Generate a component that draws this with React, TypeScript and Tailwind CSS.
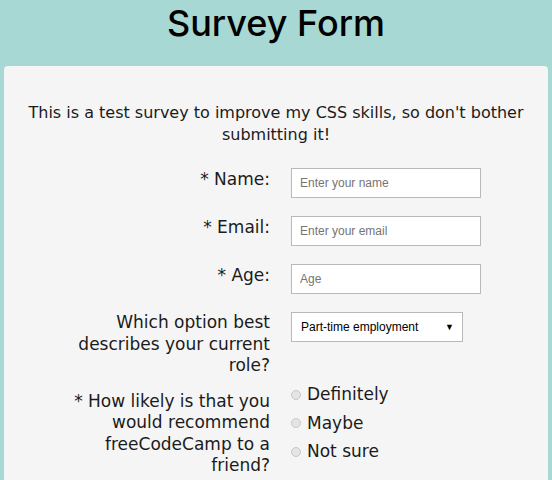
import React from 'react';

const labelCls = 'w-[215px] shrink-0 text-right text-[17px] leading-[21.5px] text-[#1b1b1b]';

function TextRow({ label, placeholder, width = 'w-[190px]' }: { label: string; placeholder: string; width?: string }) {
  return (
    <div className="flex items-start mb-[18px]">
      <label className={`${labelCls} pt-[1px]`}>{label}</label>
      <input
        className={`ml-[21px] h-[30px] ${width} border border-[#b9b9b9] bg-white px-[8px] text-[12px] outline-none placeholder:text-[#757575]`}
        style={{ fontFamily: '"Liberation Sans", Arial, sans-serif' }}
        placeholder={placeholder}
      />
    </div>
  );
}

export default function App() {
  return (
    <div className="min-h-[480px] bg-[#a8d8d3] pb-10" style={{ fontFamily: '"DejaVu Sans", Verdana, sans-serif' }}>
      <h1
        className="pt-[3px] text-center text-[36px] leading-[40px] font-medium text-black"
        style={{ fontFamily: 'Inter, "DejaVu Sans", sans-serif' }}
      >
        Survey Form
      </h1>
      <div className="mx-[4px] mt-[23px] rounded-[4px] bg-[#f5f5f5] pt-[36px] pb-10">
        <p className="mx-auto w-[520px] text-center text-[16px] leading-[21.5px] text-[#1b1b1b]">
          This is a test survey to improve my CSS skills, so don't bother submitting it!
        </p>
        <form className="mt-[23px] pl-[51px]">
          <TextRow label="* Name:" placeholder="Enter your name" />
          <TextRow label="* Email:" placeholder="Enter your email" />
          <TextRow label="* Age:" placeholder="Age" />
          <div className="flex items-start mb-[14px]">
            <label className={`${labelCls} pl-[20px]`}>Which option best describes your current role?</label>
            <div
              className="relative ml-[21px] flex h-[30px] w-[172px] items-center border border-[#b9b9b9] bg-white pl-[9px] text-[12px] text-black"
              style={{ fontFamily: '"Liberation Sans", Arial, sans-serif' }}
            >
              Part-time employment
              <span className="absolute right-[8px] top-[8px] text-[9px]">▼</span>
            </div>
          </div>
          <div className="flex items-start">
            <label className={labelCls}>* How likely is that you would recommend freeCodeCamp to a friend?</label>
            <div className="ml-[21px] -mt-[10px] flex flex-col">
              {['Definitely', 'Maybe', 'Not sure'].map((o) => (
                <label key={o} className="flex h-[28.5px] items-center text-[17px] text-[#1b1b1b]">
                  <span className="mr-[6px] h-[10px] w-[10px] rounded-full border border-[#c8c8c8] bg-[#e4e4e4]" />
                  {o}
                </label>
              ))}
            </div>
          </div>
        </form>
      </div>
    </div>
  );
}
